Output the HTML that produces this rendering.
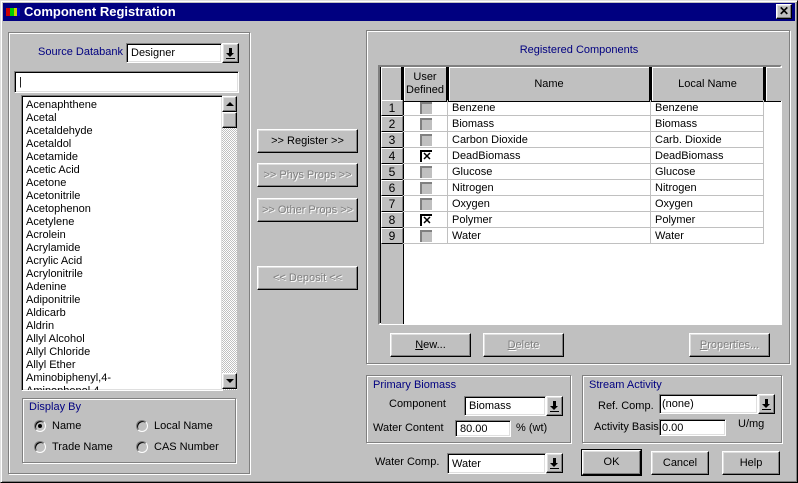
<!DOCTYPE html>
<html><head><meta charset="utf-8"><style>
*{box-sizing:border-box;margin:0;padding:0}
body{width:798px;height:483px;background:#c0c0c0;font-family:"Liberation Sans",sans-serif;font-size:11px;color:#000;position:relative;overflow:hidden}
.a{position:absolute}
.win{left:0;top:0;width:798px;height:483px;border:1px solid;border-color:#dfdfdf #000 #000 #dfdfdf;box-shadow:inset 1px 1px #fff,inset -1px -1px #808080}
.title{left:3px;top:3px;width:792px;height:18px;background:#000080;color:#fff;font-weight:bold;font-size:13px;line-height:18px;padding-left:21px}
.btn{border:1px solid;border-color:#fff #000 #000 #fff;box-shadow:inset -1px -1px #808080,inset 1px 1px #dfdfdf;background:#c0c0c0;text-align:center}
.dis{color:#808080;text-shadow:1px 1px #fff}
.sunk{background:#fff;border:1px solid;border-color:#808080 #fff #fff #808080;box-shadow:inset 1px 1px #000,inset -1px -1px #dfdfdf;padding-left:4px}
.grp{border:1px solid #808080;box-shadow:1px 1px #fff,inset 1px 1px #fff}
.blue{color:#000080}
.dd{width:17px;height:20px}
.arrow{position:absolute;left:3px;top:9px;width:0;height:0;border-left:4px solid transparent;border-right:4px solid transparent;border-top:4px solid #000}
.bar{position:absolute;left:3px;top:14px;width:9px;height:1px;background:#000}
.li{height:13px;line-height:13px;padding-left:2px;white-space:nowrap}
.radio{width:12px;height:12px;border-radius:50%;background:#c0c0c0;border:1px solid;border-color:#808080 #fff #fff #808080;box-shadow:inset 1px 1px #000}
.cell{position:absolute;height:16px;line-height:17px;border-right:1px solid #c0c0c0;border-bottom:1px solid #c0c0c0;padding-left:4px;white-space:nowrap}
.rn{position:absolute;left:0;width:22px;height:16px;background:#c0c0c0;border:1px solid;border-color:#fff #808080 #000 #fff;text-align:center;line-height:14px;font-size:12px}
.cb{position:absolute;left:17px;top:2px;width:12px;height:12px;border-top:2px solid #808080;border-left:2px solid #808080;background:#c0c0c0;font-size:11px;font-weight:bold;line-height:10px;text-align:center}
.hd{position:absolute;top:0;height:34px;background:#c0c0c0;border-right:3px solid #000;text-align:center;box-shadow:inset 1px 1px #fff}
</style></head><body>
<div class="a win"></div>
<div class="a title">Component Registration</div>
<div class="a" style="left:6px;top:8px;width:14px;height:8px;background:linear-gradient(90deg,#c00 0 4px,#0c0 4px 8px,#cc0 8px 11px,#00c 11px)"></div>
<div class="a btn" style="left:776px;top:4px;width:16px;height:15px;font-weight:bold;font-size:12px;line-height:12px">✕</div>

<div class="a grp" style="left:8px;top:32px;width:242px;height:442px"></div>
<div class="a blue" style="left:38px;top:46px">Source Databank</div>
<div class="a sunk" style="left:126px;top:43px;width:96px;height:20px;line-height:19px">Designer</div>
<div class="a btn dd" style="left:222px;top:43px;width:17px"><div class="arrow"></div><div class="bar"></div><div class="a" style="left:6px;top:4px;width:3px;height:5px;background:#000"></div></div>
<div class="a sunk" style="left:14px;top:71px;width:225px;height:22px;line-height:20px">|</div>
<div class="a sunk" style="left:21px;top:95px;width:202px;height:296px;padding:3px 0 0 2px;overflow:hidden">
<div class="li">Acenaphthene</div><div class="li">Acetal</div><div class="li">Acetaldehyde</div><div class="li">Acetaldol</div><div class="li">Acetamide</div><div class="li">Acetic Acid</div><div class="li">Acetone</div><div class="li">Acetonitrile</div><div class="li">Acetophenon</div><div class="li">Acetylene</div><div class="li">Acrolein</div><div class="li">Acrylamide</div><div class="li">Acrylic Acid</div><div class="li">Acrylonitrile</div><div class="li">Adenine</div><div class="li">Adiponitrile</div><div class="li">Aldicarb</div><div class="li">Aldrin</div><div class="li">Allyl Alcohol</div><div class="li">Allyl Chloride</div><div class="li">Allyl Ether</div><div class="li">Aminobiphenyl,4-</div><div class="li">Aminophenol,4-</div>
</div>
<div class="a" style="left:222px;top:96px;width:15px;height:294px;background:repeating-conic-gradient(#fff 0 25%,#c0c0c0 0 50%) 0 0/2px 2px"></div>
<div class="a btn" style="left:222px;top:96px;width:15px;height:16px"><div class="a" style="left:3px;top:5px;border-left:4px solid transparent;border-right:4px solid transparent;border-bottom:4px solid #000"></div></div>
<div class="a btn" style="left:222px;top:112px;width:15px;height:16px"></div>
<div class="a btn" style="left:222px;top:373px;width:15px;height:16px"><div class="a" style="left:3px;top:5px;border-left:4px solid transparent;border-right:4px solid transparent;border-top:4px solid #000"></div></div>

<div class="a grp" style="left:22px;top:398px;width:214px;height:65px"></div>
<div class="a blue" style="left:29px;top:401px">Display By</div>
<div class="a radio" style="left:34px;top:420px"><div class="a" style="left:3px;top:3px;width:4px;height:4px;background:#000;border-radius:50%"></div></div>
<div class="a" style="left:52px;top:420px">Name</div>
<div class="a radio" style="left:136px;top:420px"></div><div class="a" style="left:154px;top:420px">Local Name</div>
<div class="a radio" style="left:34px;top:441px"></div><div class="a" style="left:52px;top:441px">Trade Name</div>
<div class="a radio" style="left:136px;top:441px"></div><div class="a" style="left:154px;top:441px">CAS Number</div>

<div class="a btn" style="left:257px;top:129px;width:101px;height:24px;line-height:22px">&gt;&gt; Register &gt;&gt;</div>
<div class="a btn dis" style="left:257px;top:163px;width:101px;height:24px;line-height:22px">&gt;&gt; Phys Props &gt;&gt;</div>
<div class="a btn dis" style="left:257px;top:198px;width:101px;height:24px;line-height:22px">&gt;&gt; Other Props &gt;&gt;</div>
<div class="a btn dis" style="left:257px;top:266px;width:101px;height:24px;line-height:22px">&lt;&lt; Deposit &lt;&lt;</div>

<div class="a grp" style="left:366px;top:30px;width:424px;height:334px"></div>
<div class="a blue" style="left:366px;top:44px;width:426px;text-align:center">Registered Components</div>
<div class="a" style="left:378px;top:65px;width:404px;height:260px;background:#fff;border:2px solid;border-color:#808080 #fff #fff #808080;box-shadow:inset 1px 1px #000">
 <div class="a" style="left:1px;top:1px;width:23px;height:256px;background:#c0c0c0;border-right:1px solid #000"></div>
 <div class="hd" style="left:1px;width:23px"></div>
 <div class="hd" style="left:24px;width:45px;line-height:13px;padding-top:4px">User<br>Defined</div>
 <div class="hd" style="left:69px;width:203px;line-height:34px">Name</div>
 <div class="hd" style="left:272px;width:114px;line-height:34px">Local Name</div>
 <div class="hd" style="left:386px;width:16px;border-right:0"></div>
 <div class="a" style="left:1px;top:34px;width:400px;height:1px;background:#000"></div>
</div>
<div class="a" style="left:381px;top:100px;width:384px;height:144px">
 <div class="rn" style="top:0">1</div><div class="rn" style="top:16px">2</div><div class="rn" style="top:32px">3</div><div class="rn" style="top:48px">4</div><div class="rn" style="top:64px">5</div><div class="rn" style="top:80px">6</div><div class="rn" style="top:96px">7</div><div class="rn" style="top:112px">8</div><div class="rn" style="top:128px">9</div>
 <div class="a" style="left:22px;top:0;width:362px;height:144px">
  <div class="cell" style="left:0;top:0;width:45px;"><div class="cb"></div></div><div class="cell" style="left:45px;top:0;width:203px">Benzene</div><div class="cell" style="left:248px;top:0;width:113px">Benzene</div>
  <div class="cell" style="left:0;top:16px;width:45px;"><div class="cb"></div></div><div class="cell" style="left:45px;top:16px;width:203px">Biomass</div><div class="cell" style="left:248px;top:16px;width:113px">Biomass</div>
  <div class="cell" style="left:0;top:32px;width:45px;"><div class="cb"></div></div><div class="cell" style="left:45px;top:32px;width:203px">Carbon Dioxide</div><div class="cell" style="left:248px;top:32px;width:113px">Carb. Dioxide</div>
  <div class="cell" style="left:0;top:48px;width:45px;"><div class="cb" style="background:#fff;border-color:#000">✕</div></div><div class="cell" style="left:45px;top:48px;width:203px">DeadBiomass</div><div class="cell" style="left:248px;top:48px;width:113px">DeadBiomass</div>
  <div class="cell" style="left:0;top:64px;width:45px;"><div class="cb"></div></div><div class="cell" style="left:45px;top:64px;width:203px">Glucose</div><div class="cell" style="left:248px;top:64px;width:113px">Glucose</div>
  <div class="cell" style="left:0;top:80px;width:45px;"><div class="cb"></div></div><div class="cell" style="left:45px;top:80px;width:203px">Nitrogen</div><div class="cell" style="left:248px;top:80px;width:113px">Nitrogen</div>
  <div class="cell" style="left:0;top:96px;width:45px;"><div class="cb"></div></div><div class="cell" style="left:45px;top:96px;width:203px">Oxygen</div><div class="cell" style="left:248px;top:96px;width:113px">Oxygen</div>
  <div class="cell" style="left:0;top:112px;width:45px;"><div class="cb" style="background:#fff;border-color:#000">✕</div></div><div class="cell" style="left:45px;top:112px;width:203px">Polymer</div><div class="cell" style="left:248px;top:112px;width:113px">Polymer</div>
  <div class="cell" style="left:0;top:128px;width:45px;"><div class="cb"></div></div><div class="cell" style="left:45px;top:128px;width:203px">Water</div><div class="cell" style="left:248px;top:128px;width:113px">Water</div>
 </div>
</div>
<div class="a btn" style="left:390px;top:333px;width:81px;height:24px;line-height:22px"><u>N</u>ew...</div>
<div class="a btn dis" style="left:483px;top:333px;width:81px;height:24px;line-height:22px"><u>D</u>elete</div>
<div class="a btn dis" style="left:689px;top:333px;width:81px;height:24px;line-height:22px"><u>P</u>roperties...</div>

<div class="a grp" style="left:366px;top:375px;width:205px;height:68px"></div>
<div class="a blue" style="left:373px;top:379px">Primary Biomass</div>
<div class="a" style="left:389px;top:398px">Component</div>
<div class="a sunk" style="left:464px;top:396px;width:82px;height:20px;line-height:19px">Biomass</div>
<div class="a btn dd" style="left:546px;top:396px"><div class="a" style="left:6px;top:4px;width:3px;height:5px;background:#000"></div><div class="arrow"></div><div class="bar"></div></div>
<div class="a" style="left:373px;top:422px">Water Content</div>
<div class="a sunk" style="left:455px;top:420px;width:56px;height:17px;line-height:16px">80.00</div>
<div class="a" style="left:516px;top:422px">% (wt)</div>
<div class="a" style="left:375px;top:456px">Water Comp.</div>
<div class="a sunk" style="left:447px;top:453px;width:99px;height:21px;line-height:20px">Water</div>
<div class="a btn dd" style="left:546px;top:453px"><div class="a" style="left:6px;top:4px;width:3px;height:5px;background:#000"></div><div class="arrow"></div><div class="bar"></div></div>

<div class="a grp" style="left:582px;top:375px;width:200px;height:68px"></div>
<div class="a blue" style="left:589px;top:379px">Stream Activity</div>
<div class="a" style="left:598px;top:400px">Ref. Comp.</div>
<div class="a sunk" style="left:659px;top:394px;width:99px;height:20px;line-height:19px;padding-left:2px">(none)</div>
<div class="a btn dd" style="left:758px;top:394px"><div class="a" style="left:6px;top:4px;width:3px;height:5px;background:#000"></div><div class="arrow"></div><div class="bar"></div></div>
<div class="a" style="left:594px;top:421px">Activity Basis</div>
<div class="a sunk" style="left:659px;top:419px;width:67px;height:17px;line-height:16px;padding-left:2px">0.00</div>
<div class="a" style="left:738px;top:418px">U/mg</div>

<div class="a btn" style="left:582px;top:450px;width:59px;height:25px;line-height:23px;outline:1px solid #000">OK</div>
<div class="a btn" style="left:651px;top:451px;width:58px;height:24px;line-height:22px">Cancel</div>
<div class="a btn" style="left:722px;top:451px;width:58px;height:24px;line-height:22px">Help</div>
</body></html>
